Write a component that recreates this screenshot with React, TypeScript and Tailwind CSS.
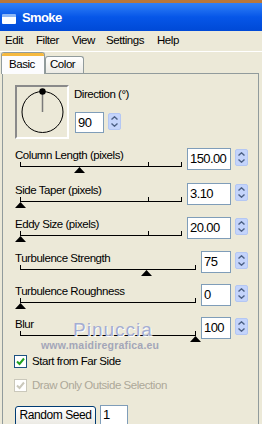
import React from "react";

interface SliderProps {
  track: string;
  pos: number;
  mid?: number;
}

const Spin = ({ className = "" }: { className?: string }) => (
  <div
    className={`flex h-[17px] w-[13px] flex-col items-center justify-center gap-[3px] rounded-[2px] border border-[#b4c7f3] bg-[#c4d4fb] ${className}`}
  >
    <svg width="7" height="4" viewBox="0 0 7 4">
      <path d="M0.5 3.5L3.5 0.8L6.5 3.5" fill="none" stroke="#4d6185" strokeWidth="1.4" />
    </svg>
    <svg width="7" height="4" viewBox="0 0 7 4">
      <path d="M0.5 0.5L3.5 3.2L6.5 0.5" fill="none" stroke="#4d6185" strokeWidth="1.4" />
    </svg>
  </div>
);

const Slider = ({ track, pos, mid }: SliderProps) => (
  <div className={`relative ml-[5px] h-[11px] ${track}`}>
    <div className="absolute left-0 right-0 top-[4px] h-px bg-black" />
    <div className="absolute left-0 top-0 h-[5px] w-px bg-black" />
    {mid !== undefined && (
      <div className="absolute top-0 h-[5px] w-px bg-black" style={{ left: mid }} />
    )}
    <div className="absolute right-0 top-0 h-[5px] w-px bg-black" />
    <svg
      className="absolute top-[5px]"
      style={{ left: pos - 5 }}
      width="11"
      height="6"
      viewBox="0 0 11 6"
    >
      <path d="M5.5 0L11 6H0Z" fill="#000" />
    </svg>
  </div>
);

interface RowProps {
  label: string;
  value: string;
  pos: number;
  wide?: boolean;
  h: string;
}

const Row = ({ label, value, pos, wide, h }: RowProps) => (
  <div className={`flex items-start ${h}`}>
    <div className={wide ? "w-[172px]" : "w-[186px]"}>
      <div className="h-[14px] whitespace-nowrap leading-[14px]">{label}</div>
      <Slider track={wide ? "w-[162px]" : "w-[176px]"} pos={pos} mid={wide ? 128 : undefined} />
    </div>
    <div
      className={`flex h-[22px] items-center border border-[#7f9db9] bg-white pl-[2px] text-[13px] tracking-[-0.6px] ${
        wide ? "w-[44px]" : "w-[30px]"
      }`}
    >
      {value}
    </div>
    <Spin className="ml-[4px] mt-[1px]" />
  </div>
);

export default function App() {
  return (
    <div className="relative h-[424px] w-[262px] overflow-hidden bg-[#ece9d8] font-['Liberation_Sans',Arial,sans-serif] text-[11.5px] tracking-[-0.45px] text-black">
      {/* Title bar */}
      <div className="h-[3px] bg-[#b9773a]" />
      <div className="flex h-[28px] items-center bg-gradient-to-b from-[#2f80f8] via-[#0656e8] to-[#0049d6] pl-[2px]">
        <div className="mt-[3px] h-[10px] w-[14px] rounded-[1px] border-t-[3px] border-[#8fb8f6] bg-white" />
        <span className="ml-[6px] mt-[2px] text-[13px] font-bold tracking-[-0.6px] text-white">Smoke</span>
      </div>

      {/* Menu bar */}
      <div className="flex h-[20px] items-center pl-[5px]">
        <span className="w-[31px]">Edit</span>
        <span className="w-[36px]">Filter</span>
        <span className="w-[34px]">View</span>
        <span className="w-[51px]">Settings</span>
        <span>Help</span>
      </div>
      <div className="h-px bg-white" />

      {/* Tabs */}
      <div className="relative z-10 flex h-[21px] items-end pl-[1px]">
        <div className="mb-[-1px] flex h-[22px] w-[44px] flex-col rounded-t-[3px] border border-b-0 border-[#919b9c] bg-[#fcfcfe]">
          <div className="h-[3px] rounded-t-[2px] bg-[#f5b940]" />
          <div className="pl-[7px] pt-[1px] leading-[14px]">Basic</div>
        </div>
        <div className="flex h-[17px] w-[39px] items-center rounded-t-[3px] border border-b-0 border-[#919b9c] bg-gradient-to-b from-white to-[#ecebe5] pl-[4px]">
          Color
        </div>
      </div>

      {/* Panel */}
      <div className="ml-[2px] h-[360px] w-[257px] border border-b-0 border-[#919b9c] pl-[12px] pt-[11px]">
        <div className="flex items-start">
          <div className="relative h-[54px] w-[54px] border-[2px] border-b-white border-l-[#8a8a8a] border-r-white border-t-[#8a8a8a]">
            <svg className="absolute left-0 top-0" width="50" height="50" viewBox="0 0 50 50">
              <circle cx="25.5" cy="25" r="20.5" fill="none" stroke="#000" strokeWidth="1" />
              <line x1="25.5" y1="4" x2="25.5" y2="25" stroke="#7a7a7a" strokeWidth="1.5" />
              <circle cx="25.5" cy="4.5" r="3.2" fill="#000" />
            </svg>
          </div>
          <div className="ml-[5px] pt-[2px]">
            <div className="h-[14px] whitespace-nowrap leading-[14px]">Direction (°)</div>
            <div className="ml-[1px] mt-[11px] flex items-start">
              <div className="flex h-[21px] w-[29px] items-center border border-[#7f9db9] bg-white pl-[2px] text-[13px] tracking-[-0.6px]">
                90
              </div>
              <Spin className="ml-[4px] mt-[1px]" />
            </div>
          </div>
        </div>

        <div className="mt-[9px] flex flex-col">
          <Row label="Column Length (pixels)" value="150.00" pos={59} wide h="h-[35px]" />
          <Row label="Side Taper (pixels)" value="3.10" pos={0} wide h="h-[34px]" />
          <Row label="Eddy Size (pixels)" value="20.00" pos={0} wide h="h-[34px]" />
          <Row label="Turbulence Strength" value="75" pos={126} h="h-[33px]" />
          <Row label="Turbulence Roughness" value="0" pos={0} h="h-[33px]" />
          <Row label="Blur" value="100" pos={175} h="h-[38px]" />
        </div>

        <div className="flex h-[24px] items-start">
          <div className="ml-[-1px] flex h-[13px] w-[13px] items-center justify-center border border-[#1c5180] bg-white">
            <svg width="9" height="9" viewBox="0 0 9 9">
              <path d="M1 4.5L3.5 7L8 1.5" fill="none" stroke="#21a121" strokeWidth="2" />
            </svg>
          </div>
          <span className="ml-[5px] whitespace-nowrap leading-[13px]">Start from Far Side</span>
        </div>
        <div className="flex h-[26px] items-start">
          <div className="ml-[-1px] flex h-[13px] w-[13px] items-center justify-center border border-[#cac8bb] bg-white">
            <svg width="9" height="9" viewBox="0 0 9 9">
              <path d="M1 4.5L3.5 7L8 1.5" fill="none" stroke="#cac8bb" strokeWidth="2" />
            </svg>
          </div>
          <span className="ml-[5px] whitespace-nowrap leading-[13px] text-[#aca899]">Draw Only Outside Selection</span>
        </div>

        <div className="flex items-start">
          <div className="mt-[1px] flex h-[24px] w-[81px] justify-center whitespace-nowrap rounded-[3px] border border-[#003c74] bg-gradient-to-b from-white to-[#e6e4dc] pt-[1px] text-[12px] leading-[14px]">
            Random Seed
          </div>
          <div className="ml-[4px] flex h-[24px] w-[28px] border border-[#7f9db9] bg-white pl-[2px] pt-[1px] text-[13px] leading-[15px]">
            1
          </div>
        </div>
      </div>

      {/* Watermark */}
      <div className="pointer-events-none absolute left-[73px] top-[316px] text-[19px] tracking-[1px] text-[#a4add2] [text-shadow:1px_1px_0_#ffffff]">
        Pinuccia
      </div>
      <div className="pointer-events-none absolute left-[41px] top-[338px] text-[10.5px] font-bold tracking-[0.2px] text-[#a3a6b8]">
        www.maidiregrafica.eu
      </div>
    </div>
  );
}
